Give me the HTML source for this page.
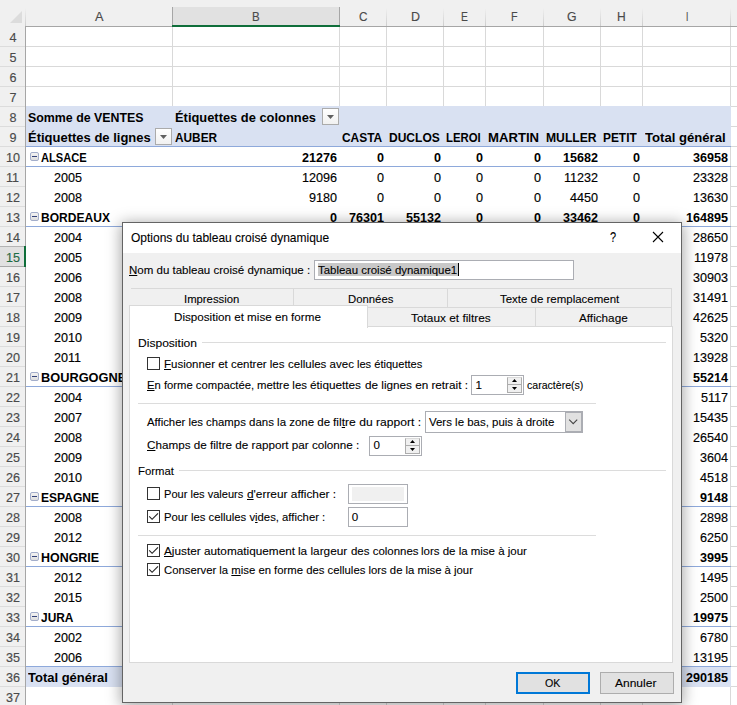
<!DOCTYPE html>
<html lang="fr"><head><meta charset="utf-8"><title>Options du tableau croisé dynamique</title>
<style>
html,body{margin:0;padding:0;}
body{width:737px;height:705px;overflow:hidden;position:relative;background:#fff;font-family:"Liberation Sans",sans-serif;color:#000;}
#sheet,#dlgc{position:absolute;left:0;top:0;width:737px;height:705px;overflow:hidden;}
#sheet{background:#fff;}
.b{position:absolute;box-sizing:border-box;}
.t{position:absolute;white-space:nowrap;line-height:20px;height:20px;}
.c{font-size:12.6px;-webkit-text-stroke:0.15px #000;}
.cb{font-size:12.6px;font-weight:bold;}
.h{font-size:12.6px;color:#4a4a4a;-webkit-text-stroke:0.15px #4a4a4a;}
.d{font-size:11.6px;color:#000;-webkit-text-stroke:0.1px #000;}
u{text-decoration:underline;text-underline-offset:1px;text-decoration-thickness:1px;}
.sep{position:absolute;height:1px;background:#dcdcdc;}
.cbx{position:absolute;width:13px;height:13px;box-sizing:border-box;border:1px solid #333;background:#fff;}
</style></head><body>
<div id="sheet">

<div class="b" style="left:0;top:0;width:737px;height:26px;background:#f0f0f0"></div>
<div class="b" style="left:0;top:26px;width:25px;height:679px;background:#f0f0f0"></div>
<div class="b" style="left:172px;top:7px;width:168px;height:18px;background:#e1e1e1;border-left:1px solid #a6a6a6;border-right:1px solid #a6a6a6"></div>
<div class="b" style="left:25px;top:26px;width:712px;height:1px;background:#a6a6a6"></div>
<div class="b" style="left:25px;top:26px;width:1px;height:679px;background:#a6a6a6"></div>
<div class="b" style="left:172px;top:25px;width:168px;height:2px;background:#0f6e3a"></div>
<svg class="b" style="left:10px;top:11px" width="13" height="13" viewBox="0 0 13 13"><polygon points="12,0 12,12 0,12" fill="#dcdcdc"/></svg>
<div class="b" style="left:25px;top:8px;width:1px;height:18px;background:linear-gradient(rgba(205,205,205,0),#cdcdcd)"></div>
<div class="b" style="left:386px;top:8px;width:1px;height:18px;background:linear-gradient(rgba(205,205,205,0),#cdcdcd)"></div>
<div class="b" style="left:443px;top:8px;width:1px;height:18px;background:linear-gradient(rgba(205,205,205,0),#cdcdcd)"></div>
<div class="b" style="left:485px;top:8px;width:1px;height:18px;background:linear-gradient(rgba(205,205,205,0),#cdcdcd)"></div>
<div class="b" style="left:543px;top:8px;width:1px;height:18px;background:linear-gradient(rgba(205,205,205,0),#cdcdcd)"></div>
<div class="b" style="left:600px;top:8px;width:1px;height:18px;background:linear-gradient(rgba(205,205,205,0),#cdcdcd)"></div>
<div class="b" style="left:642px;top:8px;width:1px;height:18px;background:linear-gradient(rgba(205,205,205,0),#cdcdcd)"></div>
<div class="b" style="left:730px;top:8px;width:1px;height:18px;background:linear-gradient(rgba(205,205,205,0),#cdcdcd)"></div>
<div class="b" style="left:172px;top:27px;width:1px;height:678px;background:#d9d9d9"></div>
<div class="b" style="left:339px;top:27px;width:1px;height:678px;background:#d9d9d9"></div>
<div class="b" style="left:386px;top:27px;width:1px;height:678px;background:#d9d9d9"></div>
<div class="b" style="left:443px;top:27px;width:1px;height:678px;background:#d9d9d9"></div>
<div class="b" style="left:485px;top:27px;width:1px;height:678px;background:#d9d9d9"></div>
<div class="b" style="left:543px;top:27px;width:1px;height:678px;background:#d9d9d9"></div>
<div class="b" style="left:600px;top:27px;width:1px;height:678px;background:#d9d9d9"></div>
<div class="b" style="left:642px;top:27px;width:1px;height:678px;background:#d9d9d9"></div>
<div class="b" style="left:730px;top:27px;width:1px;height:678px;background:#d9d9d9"></div>
<div class="b" style="left:0;top:46px;width:25px;height:1px;background:#dcdcdc"></div>
<div class="b" style="left:26px;top:46px;width:711px;height:1px;background:#d9d9d9"></div>
<div class="b" style="left:0;top:66px;width:25px;height:1px;background:#dcdcdc"></div>
<div class="b" style="left:26px;top:66px;width:711px;height:1px;background:#d9d9d9"></div>
<div class="b" style="left:0;top:86px;width:25px;height:1px;background:#dcdcdc"></div>
<div class="b" style="left:26px;top:86px;width:711px;height:1px;background:#d9d9d9"></div>
<div class="b" style="left:0;top:106px;width:25px;height:1px;background:#dcdcdc"></div>
<div class="b" style="left:26px;top:106px;width:711px;height:1px;background:#d9d9d9"></div>
<div class="b" style="left:0;top:126px;width:25px;height:1px;background:#dcdcdc"></div>
<div class="b" style="left:26px;top:126px;width:711px;height:1px;background:#d9d9d9"></div>
<div class="b" style="left:0;top:146px;width:25px;height:1px;background:#dcdcdc"></div>
<div class="b" style="left:26px;top:146px;width:711px;height:1px;background:#d9d9d9"></div>
<div class="b" style="left:0;top:166px;width:25px;height:1px;background:#dcdcdc"></div>
<div class="b" style="left:26px;top:166px;width:711px;height:1px;background:#d9d9d9"></div>
<div class="b" style="left:0;top:186px;width:25px;height:1px;background:#dcdcdc"></div>
<div class="b" style="left:26px;top:186px;width:711px;height:1px;background:#d9d9d9"></div>
<div class="b" style="left:0;top:206px;width:25px;height:1px;background:#dcdcdc"></div>
<div class="b" style="left:26px;top:206px;width:711px;height:1px;background:#d9d9d9"></div>
<div class="b" style="left:0;top:226px;width:25px;height:1px;background:#dcdcdc"></div>
<div class="b" style="left:26px;top:226px;width:711px;height:1px;background:#d9d9d9"></div>
<div class="b" style="left:0;top:246px;width:25px;height:1px;background:#dcdcdc"></div>
<div class="b" style="left:26px;top:246px;width:711px;height:1px;background:#d9d9d9"></div>
<div class="b" style="left:0;top:266px;width:25px;height:1px;background:#dcdcdc"></div>
<div class="b" style="left:26px;top:266px;width:711px;height:1px;background:#d9d9d9"></div>
<div class="b" style="left:0;top:286px;width:25px;height:1px;background:#dcdcdc"></div>
<div class="b" style="left:26px;top:286px;width:711px;height:1px;background:#d9d9d9"></div>
<div class="b" style="left:0;top:306px;width:25px;height:1px;background:#dcdcdc"></div>
<div class="b" style="left:26px;top:306px;width:711px;height:1px;background:#d9d9d9"></div>
<div class="b" style="left:0;top:326px;width:25px;height:1px;background:#dcdcdc"></div>
<div class="b" style="left:26px;top:326px;width:711px;height:1px;background:#d9d9d9"></div>
<div class="b" style="left:0;top:346px;width:25px;height:1px;background:#dcdcdc"></div>
<div class="b" style="left:26px;top:346px;width:711px;height:1px;background:#d9d9d9"></div>
<div class="b" style="left:0;top:366px;width:25px;height:1px;background:#dcdcdc"></div>
<div class="b" style="left:26px;top:366px;width:711px;height:1px;background:#d9d9d9"></div>
<div class="b" style="left:0;top:386px;width:25px;height:1px;background:#dcdcdc"></div>
<div class="b" style="left:26px;top:386px;width:711px;height:1px;background:#d9d9d9"></div>
<div class="b" style="left:0;top:406px;width:25px;height:1px;background:#dcdcdc"></div>
<div class="b" style="left:26px;top:406px;width:711px;height:1px;background:#d9d9d9"></div>
<div class="b" style="left:0;top:426px;width:25px;height:1px;background:#dcdcdc"></div>
<div class="b" style="left:26px;top:426px;width:711px;height:1px;background:#d9d9d9"></div>
<div class="b" style="left:0;top:446px;width:25px;height:1px;background:#dcdcdc"></div>
<div class="b" style="left:26px;top:446px;width:711px;height:1px;background:#d9d9d9"></div>
<div class="b" style="left:0;top:466px;width:25px;height:1px;background:#dcdcdc"></div>
<div class="b" style="left:26px;top:466px;width:711px;height:1px;background:#d9d9d9"></div>
<div class="b" style="left:0;top:486px;width:25px;height:1px;background:#dcdcdc"></div>
<div class="b" style="left:26px;top:486px;width:711px;height:1px;background:#d9d9d9"></div>
<div class="b" style="left:0;top:506px;width:25px;height:1px;background:#dcdcdc"></div>
<div class="b" style="left:26px;top:506px;width:711px;height:1px;background:#d9d9d9"></div>
<div class="b" style="left:0;top:526px;width:25px;height:1px;background:#dcdcdc"></div>
<div class="b" style="left:26px;top:526px;width:711px;height:1px;background:#d9d9d9"></div>
<div class="b" style="left:0;top:546px;width:25px;height:1px;background:#dcdcdc"></div>
<div class="b" style="left:26px;top:546px;width:711px;height:1px;background:#d9d9d9"></div>
<div class="b" style="left:0;top:566px;width:25px;height:1px;background:#dcdcdc"></div>
<div class="b" style="left:26px;top:566px;width:711px;height:1px;background:#d9d9d9"></div>
<div class="b" style="left:0;top:586px;width:25px;height:1px;background:#dcdcdc"></div>
<div class="b" style="left:26px;top:586px;width:711px;height:1px;background:#d9d9d9"></div>
<div class="b" style="left:0;top:606px;width:25px;height:1px;background:#dcdcdc"></div>
<div class="b" style="left:26px;top:606px;width:711px;height:1px;background:#d9d9d9"></div>
<div class="b" style="left:0;top:626px;width:25px;height:1px;background:#dcdcdc"></div>
<div class="b" style="left:26px;top:626px;width:711px;height:1px;background:#d9d9d9"></div>
<div class="b" style="left:0;top:646px;width:25px;height:1px;background:#dcdcdc"></div>
<div class="b" style="left:26px;top:646px;width:711px;height:1px;background:#d9d9d9"></div>
<div class="b" style="left:0;top:666px;width:25px;height:1px;background:#dcdcdc"></div>
<div class="b" style="left:26px;top:666px;width:711px;height:1px;background:#d9d9d9"></div>
<div class="b" style="left:0;top:686px;width:25px;height:1px;background:#dcdcdc"></div>
<div class="b" style="left:26px;top:686px;width:711px;height:1px;background:#d9d9d9"></div>
<div class="b" style="left:0;top:706px;width:25px;height:1px;background:#dcdcdc"></div>
<div class="b" style="left:26px;top:706px;width:711px;height:1px;background:#d9d9d9"></div>
<div class="b" style="left:0;top:246px;width:24px;height:21px;background:#e1e1e1;border-top:1px solid #b4b4b4;border-bottom:1px solid #a8a8a8"></div>
<div class="b" style="left:24px;top:246px;width:2px;height:21px;background:#0f6e3a"></div>
<div class="b" style="left:26px;top:147px;width:704px;height:520px;background:#fff"></div>
<div class="b" style="left:26px;top:106px;width:705px;height:41px;background:#d9e1f2"></div>
<div class="b" style="left:26px;top:667px;width:705px;height:20px;background:#d9e1f2"></div>
<div class="b" style="left:26px;top:146px;width:705px;height:1px;background:#8ea9db"></div>
<div class="b" style="left:26px;top:166px;width:705px;height:1px;background:#8ea9db"></div>
<div class="b" style="left:26px;top:226px;width:705px;height:1px;background:#8ea9db"></div>
<div class="b" style="left:26px;top:386px;width:705px;height:1px;background:#8ea9db"></div>
<div class="b" style="left:26px;top:506px;width:705px;height:1px;background:#8ea9db"></div>
<div class="b" style="left:26px;top:566px;width:705px;height:1px;background:#8ea9db"></div>
<div class="b" style="left:26px;top:626px;width:705px;height:1px;background:#8ea9db"></div>
<div class="b" style="left:26px;top:666px;width:705px;height:1px;background:#8ea9db"></div>
<div id="t1" class="t h" style="left:94.90px;transform-origin:0 0;top:6.63px;transform:scaleX(1.0112);">A</div>
<div id="t2" class="t h" style="left:252.30px;transform-origin:0 0;top:6.63px;transform:scaleX(0.9160);">B</div>
<div id="t3" class="t h" style="left:358.90px;transform-origin:0 0;top:6.63px;transform:scaleX(0.9331);">C</div>
<div id="t4" class="t h" style="left:410.65px;transform-origin:0 0;top:6.63px;transform:scaleX(0.9880);">D</div>
<div id="t5" class="t h" style="left:461.20px;transform-origin:0 0;top:6.63px;transform:scaleX(0.8208);">E</div>
<div id="t6" class="t h" style="left:511.35px;transform-origin:0 0;top:6.63px;transform:scaleX(0.8568);">F</div>
<div id="t7" class="t h" style="left:567.40px;transform-origin:0 0;top:6.63px;transform:scaleX(0.9697);">G</div>
<div id="t8" class="t h" style="left:617.30px;transform-origin:0 0;top:6.63px;transform:scaleX(0.9551);">H</div>
<div id="t9" class="t h" style="left:685.50px;transform-origin:0 0;top:6.63px;transform:scaleX(0.6571);">I</div>
<div id="t10" class="t h" style="left:9.50px;transform-origin:0 0;top:27.63px;">4</div>
<div id="t11" class="t h" style="left:9.50px;transform-origin:0 0;top:47.63px;">5</div>
<div id="t12" class="t h" style="left:9.50px;transform-origin:0 0;top:67.63px;">6</div>
<div id="t13" class="t h" style="left:9.50px;transform-origin:0 0;top:87.63px;">7</div>
<div id="t14" class="t h" style="left:9.50px;transform-origin:0 0;top:107.63px;">8</div>
<div id="t15" class="t h" style="left:9.50px;transform-origin:0 0;top:127.63px;">9</div>
<div id="t16" class="t h" style="left:6.00px;transform-origin:0 0;top:147.63px;">10</div>
<div id="t17" class="t h" style="left:6.00px;transform-origin:0 0;top:167.63px;">11</div>
<div id="t18" class="t h" style="left:6.00px;transform-origin:0 0;top:187.63px;">12</div>
<div id="t19" class="t h" style="left:6.00px;transform-origin:0 0;top:207.63px;">13</div>
<div id="t20" class="t h" style="left:6.00px;transform-origin:0 0;top:227.63px;">14</div>
<div id="t21" class="t h" style="left:6.00px;transform-origin:0 0;top:247.63px;color:#1a7044;">15</div>
<div id="t22" class="t h" style="left:6.00px;transform-origin:0 0;top:267.63px;">16</div>
<div id="t23" class="t h" style="left:6.00px;transform-origin:0 0;top:287.63px;">17</div>
<div id="t24" class="t h" style="left:6.00px;transform-origin:0 0;top:307.63px;">18</div>
<div id="t25" class="t h" style="left:6.00px;transform-origin:0 0;top:327.63px;">19</div>
<div id="t26" class="t h" style="left:6.00px;transform-origin:0 0;top:347.63px;">20</div>
<div id="t27" class="t h" style="left:6.00px;transform-origin:0 0;top:367.63px;">21</div>
<div id="t28" class="t h" style="left:6.00px;transform-origin:0 0;top:387.63px;">22</div>
<div id="t29" class="t h" style="left:6.00px;transform-origin:0 0;top:407.63px;">23</div>
<div id="t30" class="t h" style="left:6.00px;transform-origin:0 0;top:427.63px;">24</div>
<div id="t31" class="t h" style="left:6.00px;transform-origin:0 0;top:447.63px;">25</div>
<div id="t32" class="t h" style="left:6.00px;transform-origin:0 0;top:467.63px;">26</div>
<div id="t33" class="t h" style="left:6.00px;transform-origin:0 0;top:487.63px;">27</div>
<div id="t34" class="t h" style="left:6.00px;transform-origin:0 0;top:507.63px;">28</div>
<div id="t35" class="t h" style="left:6.00px;transform-origin:0 0;top:527.63px;">29</div>
<div id="t36" class="t h" style="left:6.00px;transform-origin:0 0;top:547.63px;">30</div>
<div id="t37" class="t h" style="left:6.00px;transform-origin:0 0;top:567.63px;">31</div>
<div id="t38" class="t h" style="left:6.00px;transform-origin:0 0;top:587.63px;">32</div>
<div id="t39" class="t h" style="left:6.00px;transform-origin:0 0;top:607.63px;">33</div>
<div id="t40" class="t h" style="left:6.00px;transform-origin:0 0;top:627.63px;">34</div>
<div id="t41" class="t h" style="left:6.00px;transform-origin:0 0;top:647.63px;">35</div>
<div id="t42" class="t h" style="left:6.00px;transform-origin:0 0;top:667.63px;">36</div>
<div id="t43" class="t h" style="left:6.00px;transform-origin:0 0;top:687.63px;">37</div>
<div id="t44" class="t cb" style="left:27.80px;transform-origin:0 0;top:107.63px;transform:scaleX(0.9832);">Somme de VENTES</div>
<div id="t45" class="t cb" style="left:175.40px;transform-origin:0 0;top:107.63px;transform:scaleX(1.0228);">Étiquettes de colonnes</div>
<div id="t46" class="t cb" style="left:27.80px;transform-origin:0 0;top:127.63px;transform:scaleX(1.0314);">Étiquettes de lignes</div>
<div id="t47" class="t cb" style="left:175.00px;transform-origin:0 0;top:127.63px;transform:scaleX(0.9401);">AUBER</div>
<div id="t48" class="t cb" style="left:341.50px;transform-origin:0 0;top:127.63px;transform:scaleX(0.9469);">CASTA</div>
<div id="t49" class="t cb" style="left:388.50px;transform-origin:0 0;top:127.63px;transform:scaleX(0.9551);">DUCLOS</div>
<div id="t50" class="t cb" style="left:445.90px;transform-origin:0 0;top:127.63px;transform:scaleX(0.9017);">LEROI</div>
<div id="t51" class="t cb" style="left:488.00px;transform-origin:0 0;top:127.63px;transform:scaleX(1.0435);">MARTIN</div>
<div id="t52" class="t cb" style="left:545.70px;transform-origin:0 0;top:127.63px;transform:scaleX(0.9644);">MULLER</div>
<div id="t53" class="t cb" style="left:602.80px;transform-origin:0 0;top:127.63px;transform:scaleX(0.9443);">PETIT</div>
<div id="t54" class="t cb" style="left:644.70px;transform-origin:0 0;top:127.63px;transform:scaleX(1.0406);">Total général</div>
<div class="b" style="left:322px;top:108px;width:17px;height:17px;border:1px solid #ababab;background:linear-gradient(#ffffff,#f1f1f1)"></div>
<svg class="b" style="left:327px;top:115px" width="7" height="4" viewBox="0 0 7 4"><polygon points="0,0 7,0 3.5,4" fill="#606060"/></svg>
<div class="b" style="left:155px;top:128px;width:17px;height:17px;border:1px solid #ababab;background:linear-gradient(#ffffff,#f1f1f1)"></div>
<svg class="b" style="left:160px;top:135px" width="7" height="4" viewBox="0 0 7 4"><polygon points="0,0 7,0 3.5,4" fill="#606060"/></svg>
<div class="b" style="left:30px;top:152px;width:9px;height:9px;border:1px solid #a3aecb;background:linear-gradient(#f2f2f2,#dedede);border-radius:2px"></div>
<div class="b" style="left:32px;top:156px;width:5px;height:1px;background:#35437a"></div>
<div id="t55" class="t cb" style="left:40.80px;transform-origin:0 0;top:147.63px;transform:scaleX(0.8845);">ALSACE</div>
<div id="t56" class="t cb" style="right:400.00px;transform-origin:100% 0;top:147.63px;">21276</div>
<div id="t57" class="t cb" style="right:353.00px;transform-origin:100% 0;top:147.63px;">0</div>
<div id="t58" class="t cb" style="right:296.00px;transform-origin:100% 0;top:147.63px;">0</div>
<div id="t59" class="t cb" style="right:254.00px;transform-origin:100% 0;top:147.63px;">0</div>
<div id="t60" class="t cb" style="right:196.00px;transform-origin:100% 0;top:147.63px;">0</div>
<div id="t61" class="t cb" style="right:139.00px;transform-origin:100% 0;top:147.63px;">15682</div>
<div id="t62" class="t cb" style="right:97.00px;transform-origin:100% 0;top:147.63px;">0</div>
<div id="t63" class="t cb" style="right:9.00px;transform-origin:100% 0;top:147.63px;">36958</div>
<div id="t64" class="t c" style="left:54.00px;transform-origin:0 0;top:167.63px;">2005</div>
<div id="t65" class="t c" style="right:400.00px;transform-origin:100% 0;top:167.63px;">12096</div>
<div id="t66" class="t c" style="right:353.00px;transform-origin:100% 0;top:167.63px;">0</div>
<div id="t67" class="t c" style="right:296.00px;transform-origin:100% 0;top:167.63px;">0</div>
<div id="t68" class="t c" style="right:254.00px;transform-origin:100% 0;top:167.63px;">0</div>
<div id="t69" class="t c" style="right:196.00px;transform-origin:100% 0;top:167.63px;">0</div>
<div id="t70" class="t c" style="right:139.00px;transform-origin:100% 0;top:167.63px;">11232</div>
<div id="t71" class="t c" style="right:97.00px;transform-origin:100% 0;top:167.63px;">0</div>
<div id="t72" class="t c" style="right:9.00px;transform-origin:100% 0;top:167.63px;">23328</div>
<div id="t73" class="t c" style="left:54.00px;transform-origin:0 0;top:187.63px;">2008</div>
<div id="t74" class="t c" style="right:400.00px;transform-origin:100% 0;top:187.63px;">9180</div>
<div id="t75" class="t c" style="right:353.00px;transform-origin:100% 0;top:187.63px;">0</div>
<div id="t76" class="t c" style="right:296.00px;transform-origin:100% 0;top:187.63px;">0</div>
<div id="t77" class="t c" style="right:254.00px;transform-origin:100% 0;top:187.63px;">0</div>
<div id="t78" class="t c" style="right:196.00px;transform-origin:100% 0;top:187.63px;">0</div>
<div id="t79" class="t c" style="right:139.00px;transform-origin:100% 0;top:187.63px;">4450</div>
<div id="t80" class="t c" style="right:97.00px;transform-origin:100% 0;top:187.63px;">0</div>
<div id="t81" class="t c" style="right:9.00px;transform-origin:100% 0;top:187.63px;">13630</div>
<div class="b" style="left:30px;top:212px;width:9px;height:9px;border:1px solid #a3aecb;background:linear-gradient(#f2f2f2,#dedede);border-radius:2px"></div>
<div class="b" style="left:32px;top:216px;width:5px;height:1px;background:#35437a"></div>
<div id="t82" class="t cb" style="left:40.80px;transform-origin:0 0;top:207.63px;transform:scaleX(0.9573);">BORDEAUX</div>
<div id="t83" class="t cb" style="right:400.00px;transform-origin:100% 0;top:207.63px;">0</div>
<div id="t84" class="t cb" style="right:353.00px;transform-origin:100% 0;top:207.63px;">76301</div>
<div id="t85" class="t cb" style="right:296.00px;transform-origin:100% 0;top:207.63px;">55132</div>
<div id="t86" class="t cb" style="right:254.00px;transform-origin:100% 0;top:207.63px;">0</div>
<div id="t87" class="t cb" style="right:196.00px;transform-origin:100% 0;top:207.63px;">0</div>
<div id="t88" class="t cb" style="right:139.00px;transform-origin:100% 0;top:207.63px;">33462</div>
<div id="t89" class="t cb" style="right:97.00px;transform-origin:100% 0;top:207.63px;">0</div>
<div id="t90" class="t cb" style="right:9.00px;transform-origin:100% 0;top:207.63px;">164895</div>
<div id="t91" class="t c" style="left:54.00px;transform-origin:0 0;top:227.63px;">2004</div>
<div id="t92" class="t c" style="right:9.00px;transform-origin:100% 0;top:227.63px;">28650</div>
<div id="t93" class="t c" style="left:54.00px;transform-origin:0 0;top:247.63px;">2005</div>
<div id="t94" class="t c" style="right:9.00px;transform-origin:100% 0;top:247.63px;">11978</div>
<div id="t95" class="t c" style="left:54.00px;transform-origin:0 0;top:267.63px;">2006</div>
<div id="t96" class="t c" style="right:9.00px;transform-origin:100% 0;top:267.63px;">30903</div>
<div id="t97" class="t c" style="left:54.00px;transform-origin:0 0;top:287.63px;">2008</div>
<div id="t98" class="t c" style="right:9.00px;transform-origin:100% 0;top:287.63px;">31491</div>
<div id="t99" class="t c" style="left:54.00px;transform-origin:0 0;top:307.63px;">2009</div>
<div id="t100" class="t c" style="right:9.00px;transform-origin:100% 0;top:307.63px;">42625</div>
<div id="t101" class="t c" style="left:54.00px;transform-origin:0 0;top:327.63px;">2010</div>
<div id="t102" class="t c" style="right:9.00px;transform-origin:100% 0;top:327.63px;">5320</div>
<div id="t103" class="t c" style="left:54.00px;transform-origin:0 0;top:347.63px;">2011</div>
<div id="t104" class="t c" style="right:9.00px;transform-origin:100% 0;top:347.63px;">13928</div>
<div class="b" style="left:30px;top:372px;width:9px;height:9px;border:1px solid #a3aecb;background:linear-gradient(#f2f2f2,#dedede);border-radius:2px"></div>
<div class="b" style="left:32px;top:376px;width:5px;height:1px;background:#35437a"></div>
<div id="t105" class="t cb" style="left:40.80px;transform-origin:0 0;top:367.63px;transform:scaleX(1.0159);">BOURGOGNE</div>
<div id="t106" class="t cb" style="right:9.00px;transform-origin:100% 0;top:367.63px;">55214</div>
<div id="t107" class="t c" style="left:54.00px;transform-origin:0 0;top:387.63px;">2004</div>
<div id="t108" class="t c" style="right:9.00px;transform-origin:100% 0;top:387.63px;">5117</div>
<div id="t109" class="t c" style="left:54.00px;transform-origin:0 0;top:407.63px;">2007</div>
<div id="t110" class="t c" style="right:9.00px;transform-origin:100% 0;top:407.63px;">15435</div>
<div id="t111" class="t c" style="left:54.00px;transform-origin:0 0;top:427.63px;">2008</div>
<div id="t112" class="t c" style="right:9.00px;transform-origin:100% 0;top:427.63px;">26540</div>
<div id="t113" class="t c" style="left:54.00px;transform-origin:0 0;top:447.63px;">2009</div>
<div id="t114" class="t c" style="right:9.00px;transform-origin:100% 0;top:447.63px;">3604</div>
<div id="t115" class="t c" style="left:54.00px;transform-origin:0 0;top:467.63px;">2010</div>
<div id="t116" class="t c" style="right:9.00px;transform-origin:100% 0;top:467.63px;">4518</div>
<div class="b" style="left:30px;top:492px;width:9px;height:9px;border:1px solid #a3aecb;background:linear-gradient(#f2f2f2,#dedede);border-radius:2px"></div>
<div class="b" style="left:32px;top:496px;width:5px;height:1px;background:#35437a"></div>
<div id="t117" class="t cb" style="left:40.80px;transform-origin:0 0;top:487.63px;transform:scaleX(0.9579);">ESPAGNE</div>
<div id="t118" class="t cb" style="right:9.00px;transform-origin:100% 0;top:487.63px;">9148</div>
<div id="t119" class="t c" style="left:54.00px;transform-origin:0 0;top:507.63px;">2008</div>
<div id="t120" class="t c" style="right:9.00px;transform-origin:100% 0;top:507.63px;">2898</div>
<div id="t121" class="t c" style="left:54.00px;transform-origin:0 0;top:527.63px;">2012</div>
<div id="t122" class="t c" style="right:9.00px;transform-origin:100% 0;top:527.63px;">6250</div>
<div class="b" style="left:30px;top:552px;width:9px;height:9px;border:1px solid #a3aecb;background:linear-gradient(#f2f2f2,#dedede);border-radius:2px"></div>
<div class="b" style="left:32px;top:556px;width:5px;height:1px;background:#35437a"></div>
<div id="t123" class="t cb" style="left:40.80px;transform-origin:0 0;top:547.63px;transform:scaleX(0.9884);">HONGRIE</div>
<div id="t124" class="t cb" style="right:9.00px;transform-origin:100% 0;top:547.63px;">3995</div>
<div id="t125" class="t c" style="left:54.00px;transform-origin:0 0;top:567.63px;">2012</div>
<div id="t126" class="t c" style="right:9.00px;transform-origin:100% 0;top:567.63px;">1495</div>
<div id="t127" class="t c" style="left:54.00px;transform-origin:0 0;top:587.63px;">2015</div>
<div id="t128" class="t c" style="right:9.00px;transform-origin:100% 0;top:587.63px;">2500</div>
<div class="b" style="left:30px;top:612px;width:9px;height:9px;border:1px solid #a3aecb;background:linear-gradient(#f2f2f2,#dedede);border-radius:2px"></div>
<div class="b" style="left:32px;top:616px;width:5px;height:1px;background:#35437a"></div>
<div id="t129" class="t cb" style="left:40.80px;transform-origin:0 0;top:607.63px;transform:scaleX(0.9476);">JURA</div>
<div id="t130" class="t cb" style="right:9.00px;transform-origin:100% 0;top:607.63px;">19975</div>
<div id="t131" class="t c" style="left:54.00px;transform-origin:0 0;top:627.63px;">2002</div>
<div id="t132" class="t c" style="right:9.00px;transform-origin:100% 0;top:627.63px;">6780</div>
<div id="t133" class="t c" style="left:54.00px;transform-origin:0 0;top:647.63px;">2006</div>
<div id="t134" class="t c" style="right:9.00px;transform-origin:100% 0;top:647.63px;">13195</div>
<div id="t135" class="t cb" style="left:28.20px;transform-origin:0 0;top:667.63px;transform:scaleX(1.0316);">Total général</div>
<div id="t136" class="t cb" style="right:9.00px;transform-origin:100% 0;top:667.63px;">290185</div>
</div>
<div id="dlgc">
<div class="b" style="left:122px;top:222px;width:560px;height:481px;border:1px solid #646464;background:#f0f0f0;box-shadow:0 2px 14px 1px rgba(0,0,0,.36)"></div>
<div class="b" style="left:123px;top:223px;width:558px;height:30px;background:#fff"></div>
<div id="t137" class="t d" style="left:130.90px;transform-origin:0 0;top:227.77px;font-size:12.2px;transform:scaleX(0.9850);">Options du tableau croisé dynamique</div>
<div id="t138" class="t d" style="left:609.70px;transform-origin:0 0;top:227.82px;font-size:13.8px;transform:scaleX(.8);transform-origin:0 0;">?</div>
<svg class="b" style="left:652px;top:231px" width="12" height="12" viewBox="0 0 12 12"><path d="M1 1 L11 11 M11 1 L1 11" stroke="#000" stroke-width="1.1" fill="none"/></svg>
<div id="t139" class="t d" style="left:129.40px;transform-origin:0 0;top:259.98px;transform:scaleX(0.9929);"><u>N</u>om du tableau croisé dynamique :</div>
<div class="b" style="left:314px;top:260px;width:260px;height:20px;border:1px solid #abadb3;background:#fff"></div>
<div class="b" style="left:318px;top:263px;width:140px;height:13px;background:#c8c8c8"></div>
<div class="b" style="left:458px;top:263px;width:1px;height:13px;background:#000"></div>
<div id="t140" class="t d" style="left:317.90px;transform-origin:0 0;top:259.98px;transform:scaleX(0.9861);">Tableau croisé dynamique1</div>
<div class="b" style="left:131px;top:288px;width:541px;height:19px;border:1px solid #d9d9d9;border-bottom:none;border-left:none;background:#f0f0f0"></div>
<div class="b" style="left:293px;top:288px;width:1px;height:19px;background:#d9d9d9"></div>
<div class="b" style="left:447px;top:288px;width:1px;height:19px;background:#d9d9d9"></div>
<div id="t141" class="t d" style="left:184.10px;transform-origin:0 0;top:288.98px;transform:scaleX(0.9753);">Impression</div>
<div id="t142" class="t d" style="left:348.10px;transform-origin:0 0;top:288.98px;transform:scaleX(0.9780);">Données</div>
<div id="t143" class="t d" style="left:499.90px;transform-origin:0 0;top:288.98px;transform:scaleX(0.9891);">Texte de remplacement</div>
<div class="b" style="left:367px;top:307px;width:305px;height:20px;border:1px solid #d9d9d9;background:#f0f0f0"></div>
<div class="b" style="left:535px;top:307px;width:1px;height:19px;background:#d9d9d9"></div>
<div id="t144" class="t d" style="left:411.00px;transform-origin:0 0;top:307.98px;transform:scaleX(1.0222);">Totaux et filtres</div>
<div id="t145" class="t d" style="left:579.40px;transform-origin:0 0;top:307.98px;transform:scaleX(1.0116);">Affichage</div>
<div class="b" style="left:129px;top:326px;width:544px;height:337px;border:1px solid #d9d9d9;background:#fff"></div>
<div class="b" style="left:129px;top:305px;width:239px;height:23px;border:1px solid #d9d9d9;border-bottom:none;background:#fff"></div>
<div id="t146" class="t d" style="left:173.80px;transform-origin:0 0;top:306.98px;transform:scaleX(1.0042);">Disposition et mise en forme</div>
<div id="t147" class="t d" style="left:137.70px;transform-origin:0 0;top:333.48px;transform:scaleX(1.0402);">Disposition</div>
<div class="sep" style="left:202px;top:342px;width:464px"></div>
<div class="cbx" style="left:147px;top:357px"></div>
<div id="t148" class="t d" style="left:163.90px;transform-origin:0 0;top:353.98px;transform:scaleX(0.9892);"><u>F</u>usionner et centrer les</div>
<div id="t149" class="t d" style="left:287.70px;transform-origin:0 0;top:353.98px;transform:scaleX(0.9926);">cellules avec</div>
<div id="t150" class="t d" style="left:356.90px;transform-origin:0 0;top:353.98px;transform:scaleX(0.9557);">les étiquettes</div>
<div id="t151" class="t d" style="left:146.80px;transform-origin:0 0;top:374.98px;transform:scaleX(0.9718);"><u>E</u>n forme compactée,</div>
<div id="t152" class="t d" style="left:257.20px;transform-origin:0 0;top:374.98px;transform:scaleX(0.9802);">mettre les</div>
<div id="t153" class="t d" style="left:310.40px;transform-origin:0 0;top:374.98px;transform:scaleX(1.0143);">étiquettes</div>
<div id="t154" class="t d" style="left:364.70px;transform-origin:0 0;top:374.98px;transform:scaleX(1.0105);">de lignes en retrait :</div>
<div class="b" style="left:471px;top:375px;width:53px;height:20px;border:1px solid #abadb3;background:#fff"></div>
<div class="b" style="left:507px;top:377px;width:15px;height:16px;background:#f0f0f0;border:1px solid #adadad;border-top-color:#dadada"></div>
<div class="b" style="left:508px;top:384px;width:13px;height:1px;background:#adadad"></div>
<svg class="b" style="left:512px;top:379px" width="5" height="3" viewBox="0 0 5 3"><polygon points="0,3 5,3 2.5,0" fill="#000"/></svg>
<svg class="b" style="left:512px;top:387px" width="5" height="3" viewBox="0 0 5 3"><polygon points="0,0 5,0 2.5,3" fill="#000"/></svg>
<div id="t155" class="t d" style="left:475.60px;transform-origin:0 0;top:374.98px;">1</div>
<div id="t156" class="t d" style="left:527.20px;transform-origin:0 0;top:374.98px;transform:scaleX(0.9117);">caractère(s)</div>
<div class="sep" style="left:138px;top:403px;width:458px"></div>
<div id="t157" class="t d" style="left:146.80px;transform-origin:0 0;top:411.98px;transform:scaleX(0.9787);">Afficher les champs</div>
<div id="t158" class="t d" style="left:248.90px;transform-origin:0 0;top:411.98px;transform:scaleX(0.9905);">dans la zone de</div>
<div id="t159" class="t d" style="left:333.30px;transform-origin:0 0;top:411.98px;transform:scaleX(1.0422);">fil<u>t</u>re du rapport :</div>
<div class="b" style="left:425px;top:411px;width:158px;height:22px;border:1px solid #abadb3;background:#fff"></div>
<div class="b" style="left:565px;top:411px;width:18px;height:22px;background:#abadb3"></div>
<div class="b" style="left:566px;top:413px;width:15px;height:18px;background:#e1e1e1"></div>
<svg class="b" style="left:568px;top:419px" width="10" height="6" viewBox="0 0 10 6"><path d="M1.2 0.7 L5.2 4.7 L9.2 0.7" stroke="#444" stroke-width="1.1" fill="none"/></svg>
<div id="t160" class="t d" style="left:428.70px;transform-origin:0 0;top:411.98px;transform:scaleX(0.9876);">Vers le bas, puis à droite</div>
<div id="t161" class="t d" style="left:146.80px;transform-origin:0 0;top:434.98px;transform:scaleX(1.0074);"><u>C</u>hamps de filtre de rapport par colonne :</div>
<div class="b" style="left:369px;top:436px;width:53px;height:20px;border:1px solid #abadb3;background:#fff"></div>
<div class="b" style="left:405px;top:438px;width:15px;height:16px;background:#f0f0f0;border:1px solid #adadad;border-top-color:#dadada"></div>
<div class="b" style="left:406px;top:445px;width:13px;height:1px;background:#adadad"></div>
<svg class="b" style="left:410px;top:440px" width="5" height="3" viewBox="0 0 5 3"><polygon points="0,3 5,3 2.5,0" fill="#000"/></svg>
<svg class="b" style="left:410px;top:448px" width="5" height="3" viewBox="0 0 5 3"><polygon points="0,0 5,0 2.5,3" fill="#000"/></svg>
<div id="t162" class="t d" style="left:373.60px;transform-origin:0 0;top:434.98px;">0</div>
<div id="t163" class="t d" style="left:137.90px;transform-origin:0 0;top:460.98px;transform:scaleX(0.9777);">Format</div>
<div class="sep" style="left:179px;top:470px;width:487px"></div>
<div class="cbx" style="left:147px;top:487px"></div>
<div id="t164" class="t d" style="left:164.00px;transform-origin:0 0;top:483.98px;transform:scaleX(0.9538);">Pour les valeurs</div>
<div id="t165" class="t d" style="left:246.60px;transform-origin:0 0;top:483.98px;transform:scaleX(1.0232);"><u>d</u>'erreur afficher :</div>
<div class="b" style="left:348px;top:484px;width:60px;height:20px;border:1px solid #abadb3;background:#fff"></div>
<div class="b" style="left:352px;top:487px;width:52px;height:14px;background:#f0f0f0"></div>
<div class="cbx" style="left:147px;top:510px"></div>
<svg class="b" style="left:147px;top:510px" width="13" height="13" viewBox="0 0 13 13"><path d="M2.2 6.4 L5.1 9.3 L11 3.3" stroke="#222" stroke-width="1.15" fill="none"/></svg>
<div id="t166" class="t d" style="left:164.00px;transform-origin:0 0;top:506.98px;transform:scaleX(0.9746);">Pour les cellules v<u>i</u>des, afficher :</div>
<div class="b" style="left:348px;top:507px;width:60px;height:20px;border:1px solid #abadb3;background:#fff"></div>
<div id="t167" class="t d" style="left:351.80px;transform-origin:0 0;top:506.98px;">0</div>
<div class="sep" style="left:138px;top:535px;width:458px"></div>
<div class="cbx" style="left:147px;top:544px"></div>
<svg class="b" style="left:147px;top:544px" width="13" height="13" viewBox="0 0 13 13"><path d="M2.2 6.4 L5.1 9.3 L11 3.3" stroke="#222" stroke-width="1.15" fill="none"/></svg>
<div id="t168" class="t d" style="left:163.70px;transform-origin:0 0;top:540.98px;transform:scaleX(1.0170);"><u>A</u>juster automatiquement</div>
<div id="t169" class="t d" style="left:298.10px;transform-origin:0 0;top:540.98px;transform:scaleX(1.0177);">la largeur</div>
<div id="t170" class="t d" style="left:350.60px;transform-origin:0 0;top:540.98px;transform:scaleX(0.9879);">des colonnes</div>
<div id="t171" class="t d" style="left:421.40px;transform-origin:0 0;top:540.98px;transform:scaleX(0.9900);">lors de la mise à jour</div>
<div class="cbx" style="left:147px;top:563px"></div>
<svg class="b" style="left:147px;top:563px" width="13" height="13" viewBox="0 0 13 13"><path d="M2.2 6.4 L5.1 9.3 L11 3.3" stroke="#222" stroke-width="1.15" fill="none"/></svg>
<div id="t172" class="t d" style="left:164.00px;transform-origin:0 0;top:559.98px;transform:scaleX(0.9763);">Conserver la <u>m</u>ise en forme des cellules lors de la mise à jour</div>
<div class="b" style="left:516px;top:672px;width:74px;height:22px;border:2px solid #0078d7;background:#e1e1e1"></div>
<div class="b" style="left:600px;top:672px;width:74px;height:22px;border:1px solid #adadad;background:#e1e1e1"></div>
<div id="t173" class="t d" style="left:545.30px;transform-origin:0 0;top:672.98px;transform:scaleX(0.9185);">OK</div>
<div id="t174" class="t d" style="left:615.40px;transform-origin:0 0;top:672.98px;transform:scaleX(1.0358);">Annuler</div>
</div>
</body></html>
